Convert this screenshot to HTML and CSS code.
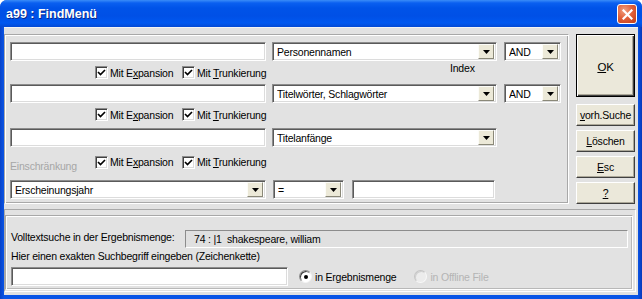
FILE: index.html
```html
<!DOCTYPE html>
<html lang="de">
<head>
<meta charset="utf-8">
<title>a99 : FindMenü</title>
<link rel="stylesheet" href="styles.css">
</head>
<body>
<div class="window">
  <div class="titlebar">
    <span class="title">a99 : FindMenü</span>
    <span class="close"><svg width="11" height="11" viewBox="0 0 11 11"><path d="M1.5 1.5 L9.5 9.5 M9.5 1.5 L1.5 9.5" stroke="#fff" stroke-width="2.2" stroke-linecap="square"/></svg></span>
  </div>
  <div class="client">
    <div class="top">
      <div class="panel search">
        <div class="row">
          <div class="field w-main"></div>
          <div class="select w-index"><span>Personennamen</span><span class="arrow"><svg width="7" height="4" viewBox="0 0 7 4"><path d="M0 0H7L3.5 4Z" fill="#000"/></svg></span></div>
          <div class="select w-op"><span>AND</span><span class="arrow"><svg width="7" height="4" viewBox="0 0 7 4"><path d="M0 0H7L3.5 4Z" fill="#000"/></svg></span></div>
        </div>
        <div class="cbrow cb1">
          <span class="side"></span>
          <span class="cb"><span class="box"><svg width="9" height="9" viewBox="0 0 9 9"><path d="M1 4 L3.5 6.5 L8 2" stroke="#000" stroke-width="1.7" fill="none"/></svg></span><span>Mit E<u>x</u>pansion</span></span>
          <span class="cb"><span class="box"><svg width="9" height="9" viewBox="0 0 9 9"><path d="M1 4 L3.5 6.5 L8 2" stroke="#000" stroke-width="1.7" fill="none"/></svg></span><span>Mit <u>T</u>runkierung</span></span>
          <span class="index">Index</span>
        </div>
        <div class="row r2">
          <div class="field w-main"></div>
          <div class="select w-index"><span>Titelwörter, Schlagwörter</span><span class="arrow"><svg width="7" height="4" viewBox="0 0 7 4"><path d="M0 0H7L3.5 4Z" fill="#000"/></svg></span></div>
          <div class="select w-op"><span>AND</span><span class="arrow"><svg width="7" height="4" viewBox="0 0 7 4"><path d="M0 0H7L3.5 4Z" fill="#000"/></svg></span></div>
        </div>
        <div class="cbrow cb2">
          <span class="side"></span>
          <span class="cb"><span class="box"><svg width="9" height="9" viewBox="0 0 9 9"><path d="M1 4 L3.5 6.5 L8 2" stroke="#000" stroke-width="1.7" fill="none"/></svg></span><span>Mit E<u>x</u>pansion</span></span>
          <span class="cb"><span class="box"><svg width="9" height="9" viewBox="0 0 9 9"><path d="M1 4 L3.5 6.5 L8 2" stroke="#000" stroke-width="1.7" fill="none"/></svg></span><span>Mit <u>T</u>runkierung</span></span>
        </div>
        <div class="row r3">
          <div class="field w-main"></div>
          <div class="select w-index"><span>Titelanfänge</span><span class="arrow"><svg width="7" height="4" viewBox="0 0 7 4"><path d="M0 0H7L3.5 4Z" fill="#000"/></svg></span></div>
        </div>
        <div class="cbrow cb3">
          <span class="side disabled">Einschränkung</span>
          <span class="cb"><span class="box"><svg width="9" height="9" viewBox="0 0 9 9"><path d="M1 4 L3.5 6.5 L8 2" stroke="#000" stroke-width="1.7" fill="none"/></svg></span><span>Mit E<u>x</u>pansion</span></span>
          <span class="cb"><span class="box"><svg width="9" height="9" viewBox="0 0 9 9"><path d="M1 4 L3.5 6.5 L8 2" stroke="#000" stroke-width="1.7" fill="none"/></svg></span><span>Mit <u>T</u>runkierung</span></span>
        </div>
        <div class="row r4">
          <div class="select w-main"><span>Erscheinungsjahr</span><span class="arrow"><svg width="7" height="4" viewBox="0 0 7 4"><path d="M0 0H7L3.5 4Z" fill="#000"/></svg></span></div>
          <div class="select w-eq"><span>=</span><span class="arrow"><svg width="7" height="4" viewBox="0 0 7 4"><path d="M0 0H7L3.5 4Z" fill="#000"/></svg></span></div>
          <div class="field w-val"></div>
        </div>
      </div>
      <div class="buttons">
        <div class="btn ok"><span><u>O</u>K</span></div>
        <div class="btn first"><span><u>v</u>orh.Suche</span></div>
        <div class="btn"><span><u>L</u>öschen</span></div>
        <div class="btn"><span><u>E</u>sc</span></div>
        <div class="btn"><span><u>?</u></span></div>
      </div>
    </div>
    <div class="bottom">
      <div class="bottom-inner">
        <div class="volltext">
          <span class="vlabel">Volltextsuche in der Ergebnismenge:</span>
          <div class="display">74 : |1&nbsp;&nbsp;shakespeare, william</div>
        </div>
        <div class="hint">Hier einen exakten Suchbegriff eingeben (Zeichenkette)</div>
        <div class="entry">
          <div class="field w-term"></div>
          <span class="radio"><span class="dot on"></span><span>in Ergebnismenge</span></span>
          <span class="radio off"><span class="dot"></span><span>in Offline File</span></span>
        </div>
      </div>
    </div>
  </div>
</div>
</body>
</html>
```

FILE: styles.css
```css
* { box-sizing: border-box; }

html, body {
  margin: 0;
  padding: 0;
  background: #fff;
}

body {
  font-family: "Liberation Sans", Arial, sans-serif;
  font-size: 10.5px;
  letter-spacing: -0.2px;
  color: #000;
}

u { text-decoration: underline; text-underline-offset: 1px; }

.window {
  width: 642px;
  height: 299px;
  background: linear-gradient(90deg, #0842c8 0, #0a55e6 4px, #0a55e6 638px, #0838b8 642px);
  border-radius: 7px 7px 0 0;
  display: flex;
  flex-direction: column;
  overflow: hidden;
}

.titlebar {
  height: 27px;
  flex: none;
  display: flex;
  align-items: center;
  padding: 0 5px 0 6px;
  background: linear-gradient(180deg, #3a8cf8 0, #0a5ff0 3px, #0053e8 8px, #0050e6 16px, #0058f0 23px, #0349d4 27px);
}

.title {
  color: #fff;
  font-family: "Liberation Sans", Arial, sans-serif;
  font-weight: bold;
  font-size: 12.5px;
  letter-spacing: 0;
  text-shadow: 1px 1px #0a2a8a;
  flex: 1;
  margin-top: 1px;
}

.close {
  width: 20px;
  height: 20px;
  border: 1px solid #fff;
  border-radius: 3px;
  background: radial-gradient(circle at 35% 30%, #f0a080 0, #e2623c 45%, #c13a14 100%);
  display: flex;
  align-items: center;
  justify-content: center;
  margin-top: 1px;
}

.client {
  flex: 1;
  margin: 0 4px 4px;
  background: #e2e2e2;
  display: flex;
  flex-direction: column;
  padding: 6px 2px 3px 0;
  border-top: 1px solid #f4f4f4;
}

.top {
  display: flex;
  gap: 6px;
}

.panel.search {
  width: 565px;
  height: 170px;
  border: 1px solid;
  border-color: #a8a8a8 #ffffff #ffffff #a8a8a8;
  box-shadow: inset 1px 1px #ffffff, inset -1px -1px #a8a8a8;
  padding: 7px 0 0 5px;
  display: flex;
  flex-direction: column;
}

.row {
  display: flex;
  height: 19px;
  gap: 6px;
}

.row .w-op { margin-left: 1px; }
.row.r2 { margin-top: 4px; }
.row.r3 { margin-top: 6px; }
.row.r4 { margin-top: 13px; gap: 7px; }
.row.r4 .w-val { margin-left: 1px; }

.field {
  height: 19px;
  background: #fff;
  border: 1px solid;
  border-color: #8c8c8c #ffffff #ffffff #8c8c8c;
  box-shadow: inset 1px 1px #5a5a5a, inset -1px -1px #dcdcdc;
}

.select {
  height: 19px;
  background: #fff;
  border: 1px solid;
  border-color: #8c8c8c #ffffff #ffffff #8c8c8c;
  box-shadow: inset 1px 1px #5a5a5a, inset -1px -1px #dcdcdc;
  display: flex;
  align-items: center;
  padding: 0 2px 0 4px;
  white-space: nowrap;
}

.select > span:first-child { flex: 1; overflow: hidden; }

.arrow {
  width: 16px;
  height: 15px;
  background: #ece9d8;
  border: 1px solid;
  border-color: #fcfcf8 #8a8878 #8a8878 #fcfcf8;
  display: flex;
  align-items: center;
  justify-content: center;
  padding-top: 1px;
}

.w-main { width: 256px; }
.w-index { width: 225px; }
.w-op { width: 57px; }
.w-eq { width: 71px; }
.w-val { width: 143px; }
.w-term { width: 277px; }

.cbrow {
  display: grid;
  grid-template-columns: 85px 87px 268px auto;
  align-items: center;
  height: 15px;
}

.cbrow.cb1 { margin-top: 4px; }
.cbrow.cb2 { margin-top: 4px; }
.cbrow.cb3 { margin-top: 5px; }

.cb {
  display: flex;
  align-items: center;
  gap: 2px;
  white-space: nowrap;
}

.box {
  width: 13px;
  height: 13px;
  background: #fff;
  border: 1px solid;
  border-color: #8c8c8c #ffffff #ffffff #8c8c8c;
  box-shadow: inset 1px 1px #404040, inset -1px -1px #dcdcdc;
  display: flex;
  align-items: center;
  justify-content: center;
  flex: none;
}

.index {
  align-self: start;
  margin-top: -3px;
}

.side.disabled {
  color: #a6a6a6;
  padding-top: 8px;
}

.buttons {
  width: 60px;
  display: flex;
  flex-direction: column;
  gap: 4px;
  padding-left: 1px;
}

.btn {
  height: 22px;
  background: #ebe8da;
  border: 1px solid;
  border-color: #ffffff #404040 #404040 #ffffff;
  box-shadow: inset -1px -1px #aca899;
  display: flex;
  align-items: center;
  justify-content: center;
  white-space: nowrap;
}

.btn.ok {
  height: 63px;
  border: 1px solid #000;
  box-shadow: inset 1px 1px #ffffff, inset -1px -1px #404040, inset -2px -2px #aca899;
  font-size: 11.5px;
  padding-top: 2px;
}

.btn.first { margin-top: 3px; }

.bottom {
  flex: 1;
  margin-top: 5px;
  border: 1px solid;
  border-color: #a8a8a8 #ffffff #ffffff #a8a8a8;
  display: flex;
  flex-direction: column;
  padding-top: 5px;
}

.bottom-inner {
  flex: 1;
  border: 1px solid;
  border-color: #a8a8a8 #ffffff #ffffff #a8a8a8;
  box-shadow: inset 1px 1px #ffffff, inset -1px -1px #b8b8b8;
  padding: 14px 4px 0 5px;
  margin: 0 2px 1px 0;
}

.volltext {
  display: flex;
  align-items: center;
  height: 18px;
}

.vlabel {
  width: 174px;
  flex: none;
  white-space: nowrap;
  padding-bottom: 4px;
}

.display {
  flex: 1;
  height: 18px;
  background: #e0e0e0;
  border: 1px solid;
  border-color: #8c8c8c #ffffff #ffffff #8c8c8c;
  padding-left: 8px;
  display: flex;
  align-items: center;
  white-space: pre;
}

.hint {
  margin-top: 1px;
  height: 14px;
  line-height: 14px;
  white-space: nowrap;
}

.entry {
  margin-top: 4px;
  display: flex;
  align-items: center;
}

.radio {
  display: flex;
  align-items: center;
  gap: 3px;
  margin-left: 11px;
  white-space: nowrap;
}

.radio.off {
  color: #b4b4b4;
  margin-left: 18px;
}

.dot {
  width: 13px;
  height: 13px;
  border-radius: 50%;
  background: #fff;
  border: 1px solid;
  border-color: #8c8c8c #f4f4f4 #f4f4f4 #8c8c8c;
  box-shadow: inset 1px 1px #404040;
  display: flex;
  align-items: center;
  justify-content: center;
}

.dot.on::after {
  content: "";
  width: 4px;
  height: 4px;
  border-radius: 50%;
  background: #000;
}

.radio.off .dot {
  background: #ececec;
  border-color: #c4c4c4 #f8f8f8 #f8f8f8 #c4c4c4;
  box-shadow: inset 1px 1px #d0d0d0;
}
```
